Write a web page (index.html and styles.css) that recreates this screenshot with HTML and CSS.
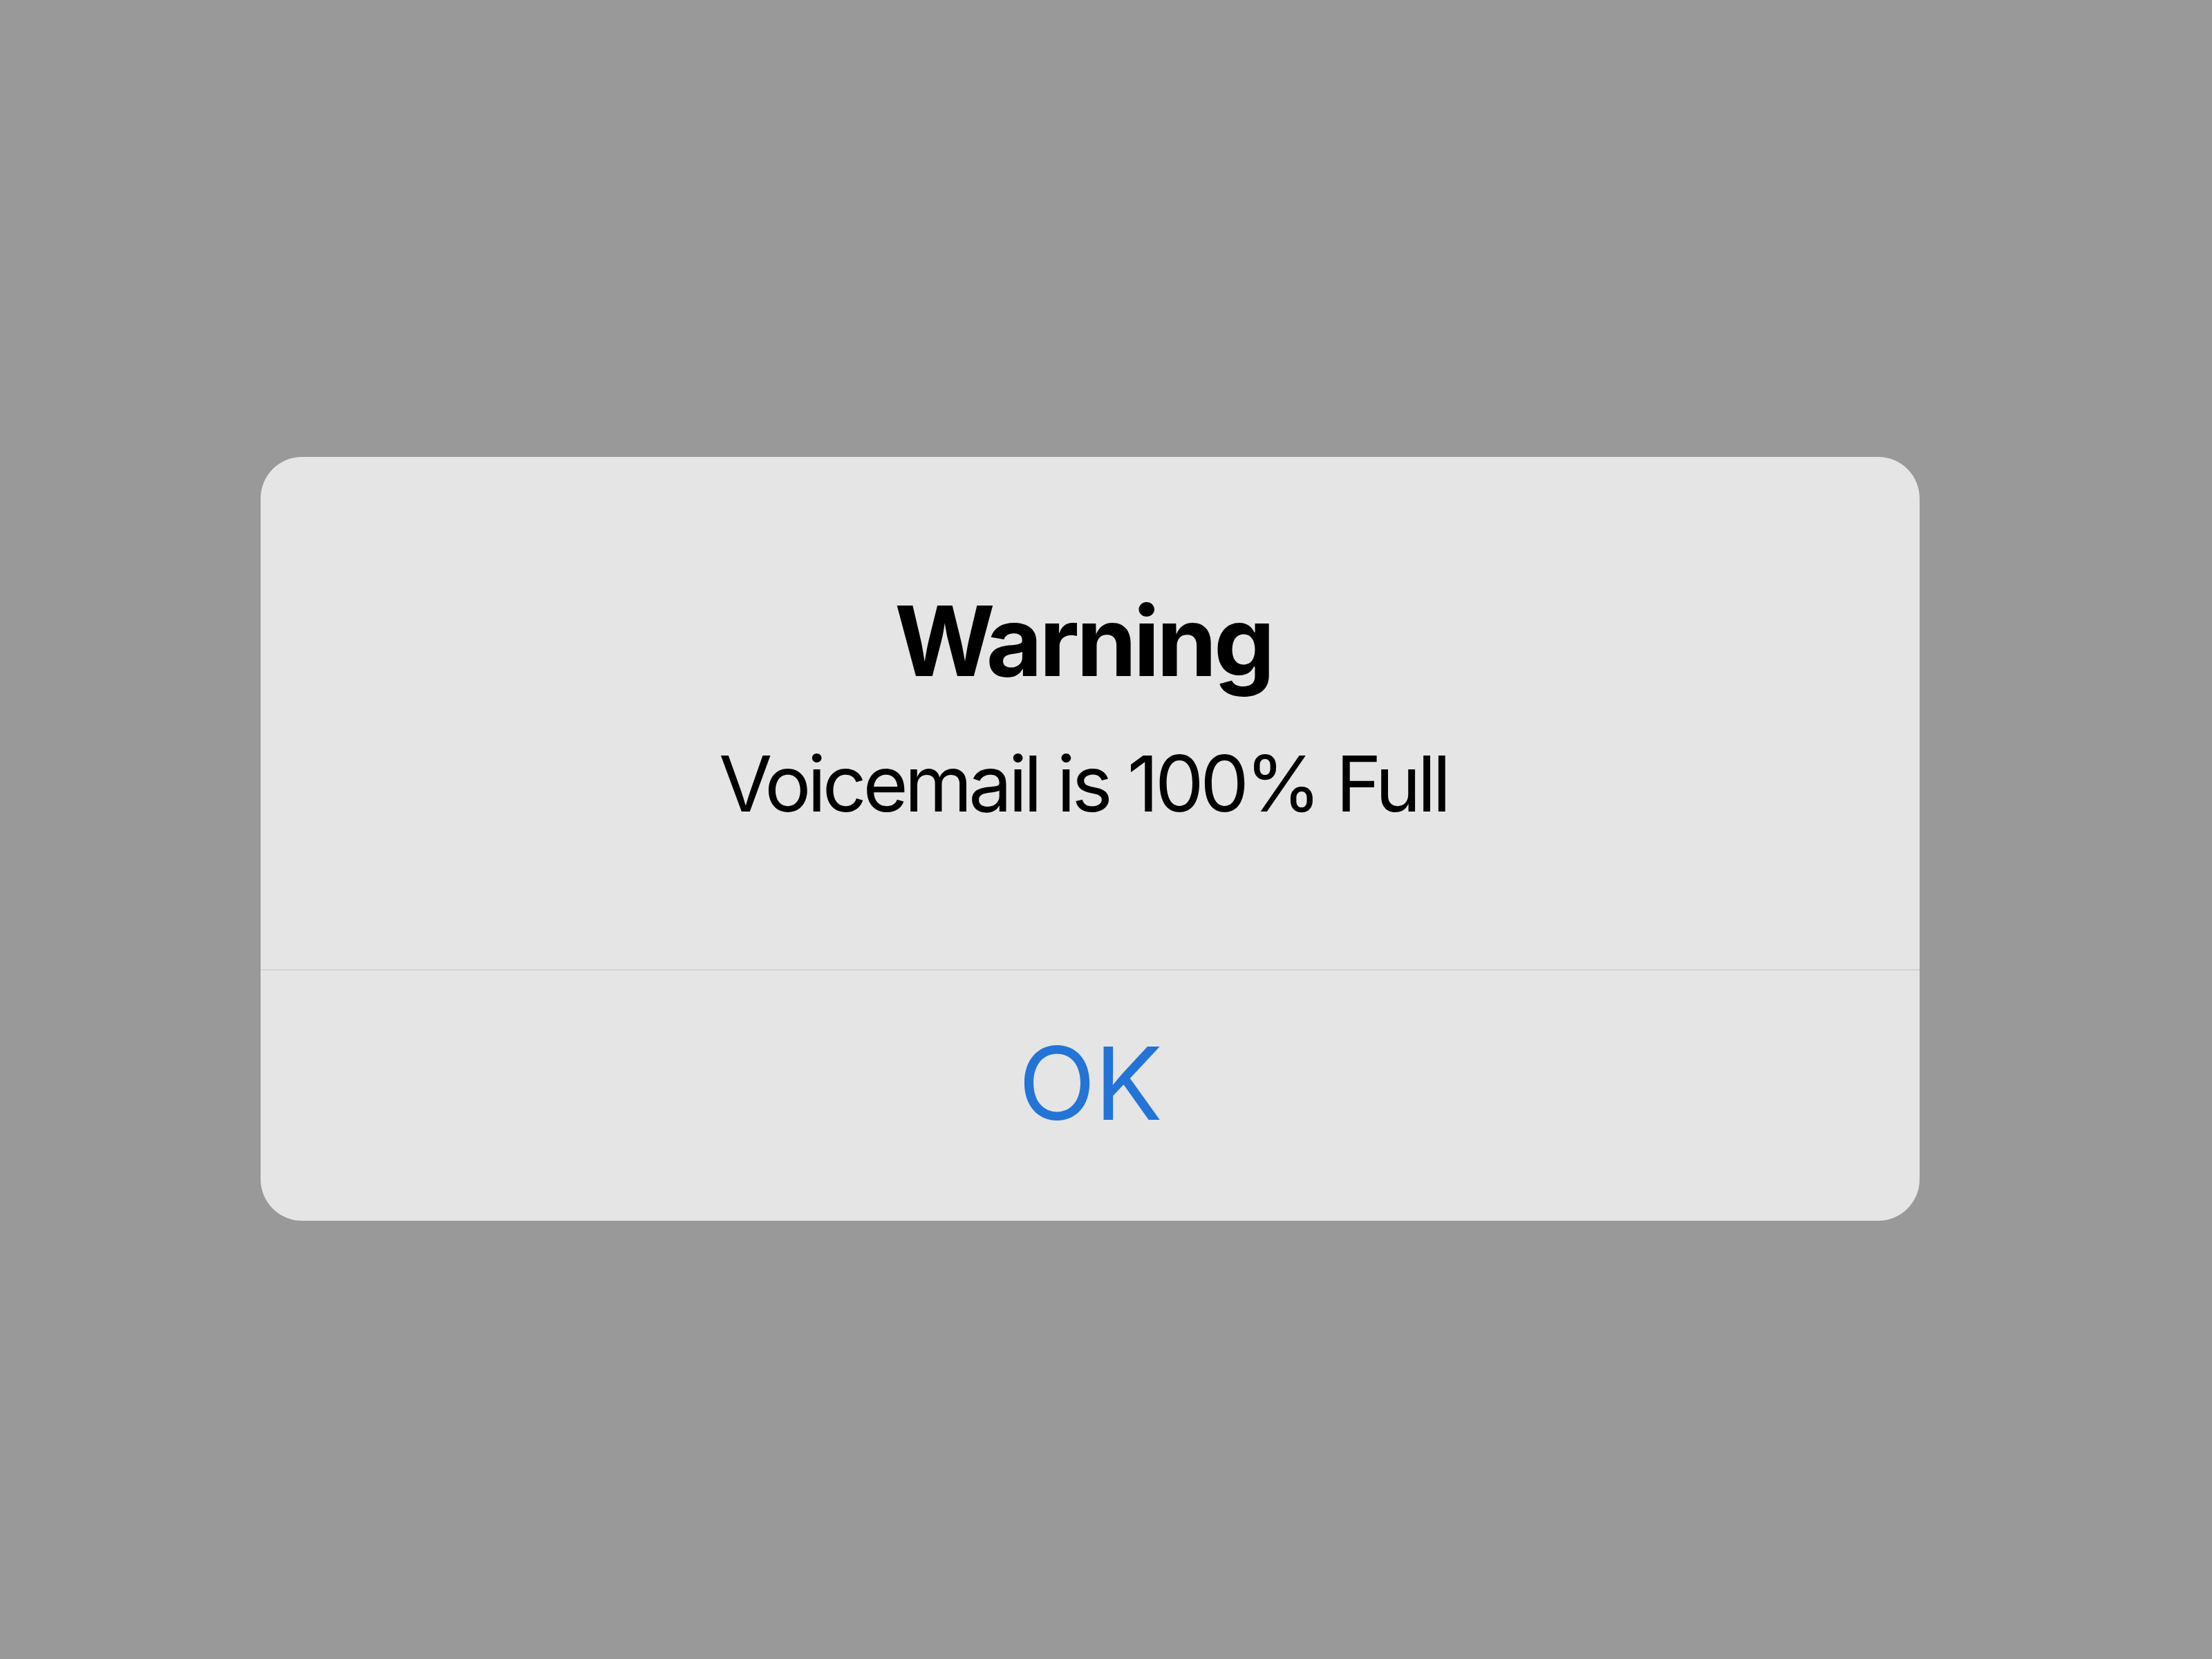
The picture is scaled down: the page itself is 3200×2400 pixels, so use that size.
FILE: index.html
```html
<!DOCTYPE html>
<html lang="en">
<head>
<meta charset="utf-8">
<title>Warning</title>
<link rel="stylesheet" href="styles.css">
</head>
<body>
<div class="alert" role="alertdialog">
  <div class="alert-body">
    <div class="alert-title">Warning</div>
    <div class="alert-message">Voicemail is 100% Full</div>
  </div>
  <div class="alert-actions">
    <button class="alert-button">OK</button>
  </div>
</div>
</body>
</html>
```

FILE: styles.css
```css
html, body {
  margin: 0;
  padding: 0;
}
body {
  width: 3200px;
  height: 2400px;
  background: #999999;
  box-sizing: border-box;
  padding: 661px 423px 0 377px;
  font-family: Inter, "Noto Sans", "Liberation Sans", sans-serif;
}
.alert {
  width: 2400px;
  height: 1105px;
  background: #e5e5e5;
  border-radius: 60px;
  display: flex;
  flex-direction: column;
  overflow: hidden;
}
.alert-body {
  padding: 181px 60px 0 40px;
  height: 741px;
  box-sizing: border-box;
  display: flex;
  flex-direction: column;
  align-items: center;
}
.alert-title {
  font-size: 140px;
  line-height: 170px;
  font-weight: 700;
  letter-spacing: -4.5px;
  color: #000;
}
.alert-message {
  margin-top: 53px;
  font-size: 112px;
  line-height: 136px;
  font-weight: 400;
  letter-spacing: -5.3px;
  color: #000;
}
.alert-actions {
  flex: 1;
  border-top: 2px solid #d4d4d4;
  display: flex;
  justify-content: center;
  padding-top: 75px;
}
.alert-button {
  background: none;
  border: 0;
  padding: 0;
  margin: 0;
  font-family: inherit;
  font-size: 146px;
  line-height: 176px;
  height: 176px;
  font-weight: 400;
  letter-spacing: -1px;
  color: #2374d6;
}
```
